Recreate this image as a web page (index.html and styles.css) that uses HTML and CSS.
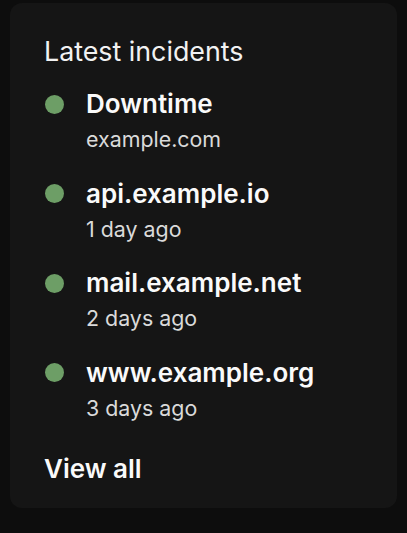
FILE: index.html
```html
<!DOCTYPE html>
<html>
<head>
<meta charset="utf-8">
<link rel="stylesheet" href="styles.css">
</head>
<body>
<div class="card">
  <h2 class="title">Latest incidents</h2>
  <ul class="list">
    <li class="item"><span class="dot"></span><div class="text"><div class="name">Downtime</div><div class="sub">example.com</div></div></li>
    <li class="item"><span class="dot"></span><div class="text"><div class="name">api.example.io</div><div class="sub">1 day ago</div></div></li>
    <li class="item"><span class="dot"></span><div class="text"><div class="name">mail.example.net</div><div class="sub">2 days ago</div></div></li>
    <li class="item"><span class="dot"></span><div class="text"><div class="name">www.example.org</div><div class="sub">3 days ago</div></div></li>
  </ul>
  <div class="view">View all</div>
</div>
</body>
</html>
```
FILE: styles.css
```css
html, body { margin: 0; padding: 0; }
body {
  background: #0d0d0d;
  width: 407px;
  height: 533px;
  font-family: Inter, "Noto Sans", sans-serif;
  color: #f4f4f4;
  padding: 3px 10px 0 10px;
  box-sizing: border-box;
}
.card {
  background: #151515;
  border-radius: 12px;
  height: 505px;
  box-sizing: border-box;
  padding: 33px 34px 0 34px;
  display: flex;
  flex-direction: column;
}
.title {
  margin: 0;
  font-size: 26.8px;
  font-weight: 400;
  line-height: 30px;
  color: #f2f2f2;
}
.list {
  list-style: none;
  margin: 23px 0 0 0;
  padding: 0;
  display: flex;
  flex-direction: column;
  gap: 26.5px;
}
.item {
  display: flex;
  align-items: flex-start;
  gap: 22px;
}
.dot {
  width: 19px;
  height: 19px;
  border-radius: 50%;
  background: #6d9e66;
  margin-top: 5.5px;
  margin-left: 1px;
  flex: none;
}
.name {
  font-size: 26px;
  font-weight: 600;
  line-height: 30px;
  color: #fafafa;
}
.sub {
  font-size: 21.4px;
  line-height: 26px;
  margin-top: 7px;
  color: #dadada;
}
.view {
  margin-top: 33.5px;
  font-size: 26px;
  font-weight: 600;
  line-height: 30px;
  color: #fafafa;
}
```
